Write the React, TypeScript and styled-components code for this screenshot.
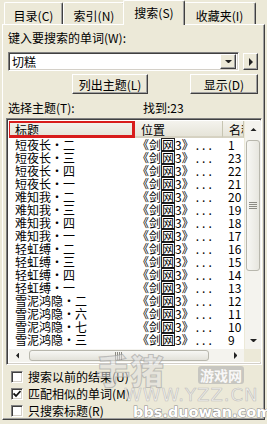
import React from "react";
import styled, { createGlobalStyle } from "styled-components";

const FONT = `"Noto Sans CJK SC", "Liberation Sans", sans-serif`;
const FACE = "#ece9d8";

const Global = createGlobalStyle`
  html, body { margin: 0; padding: 0; background: ${FACE}; }
  body { font-family: ${FONT}; font-size: 12px; color: #000; }
  * { box-sizing: border-box; }
`;

const Root = styled.div`
  position: relative;
  width: 267px;
  height: 424px;
  overflow: hidden;
  background: ${FACE};
  font-family: ${FONT};
  font-size: 12px;
  line-height: 13px;
`;

const TabBar = styled.div`
  position: relative;
  z-index: 2;
  display: flex;
  align-items: flex-end;
  height: 24px;
  padding-left: 4px;
`;

const Tab = styled.div<{ $w: number; $active?: boolean }>`
  width: ${(p) => p.$w}px;
  height: ${(p) => (p.$active ? 25 : 22)}px;
  margin: ${(p) => (p.$active ? "0 -2px -1px -2px" : "0")};
  padding-top: ${(p) => (p.$active ? 5 : 6)}px;
  background: ${FACE};
  border: 1px solid;
  border-color: #fff #404040 transparent #fff;
  border-bottom: none;
  border-radius: 2px 2px 0 0;
  box-shadow: inset -1px 0 0 #a0a0a0;
  text-align: center;
  white-space: nowrap;
  position: relative;
  z-index: ${(p) => (p.$active ? 3 : 1)};
`;

const Panel = styled.div`
  position: relative;
  z-index: 1;
  margin: 0 2px;
  height: 396px;
  border: 1px solid;
  border-color: #fff #404040 #404040 #fff;
  box-shadow: inset -1px -1px 0 #a0a0a0;
  display: flex;
  flex-direction: column;
  padding: 6px 6px 0 5px;
`;

const Label = styled.div`
  height: 13px;
  white-space: nowrap;
`;

const InputRow = styled.div`
  display: flex;
  align-items: center;
  gap: 4px;
  margin-top: 8px;
  height: 19px;
`;

const TextBox = styled.div`
  flex: 1;
  height: 19px;
  background: #fff;
  border: 1px solid;
  border-color: #7f7f7f #fff #fff #7f7f7f;
  box-shadow: inset 1px 1px 0 #404040, inset -1px -1px 0 #d4d0c8;
  display: flex;
  align-items: center;
  padding: 0 2px 0 3px;
`;

const TextValue = styled.span`
  flex: 1;
`;

const RaisedBtn = styled.div<{ $w: number; $h: number }>`
  width: ${(p) => p.$w}px;
  height: ${(p) => p.$h}px;
  background: ${FACE};
  border: 1px solid;
  border-color: #fff #404040 #404040 #fff;
  box-shadow: inset -1px -1px 0 #a0a0a0;
  display: flex;
  align-items: center;
  justify-content: center;
  flex: none;
`;

const ButtonRow = styled.div`
  display: flex;
  margin-top: 3px;
  padding-left: 64px;
  gap: 42px;
`;

const PushButton = styled.div<{ $w: number }>`
  width: ${(p) => p.$w}px;
  height: 20px;
  background: ${FACE};
  border: 1px solid;
  border-color: #fff #404040 #404040 #fff;
  box-shadow: inset -1px -1px 0 #a0a0a0;
  display: flex;
  align-items: center;
  justify-content: center;
  white-space: nowrap;
`;

const TopicRow = styled.div`
  display: grid;
  grid-template-columns: 135px 1fr;
  margin-top: 7px;
  height: 13px;
  white-space: nowrap;
`;

const ListBox = styled.div`
  margin: 4px -4px 0 -2px;
  border: 1px solid;
  border-color: #7f7f7f #fff #fff #7f7f7f;
  box-shadow: inset 1px 1px 0 #404040, inset -1px -1px 0 #d4d0c8;
  padding: 2px;
  background: #fff;
  display: grid;
  grid-template-columns: 235px 17px;
  grid-template-rows: 228px 13px;
`;

const ListArea = styled.div`
  overflow: hidden;
  display: flex;
  flex-direction: column;
`;

const COLS = "126px 88px 21px";

const HeaderRow = styled.div`
  display: grid;
  grid-template-columns: ${COLS};
  height: 17px;
  flex: none;
`;

const HeaderCell = styled.div<{ $marked?: boolean }>`
  position: relative;
  background: linear-gradient(#f4f3ee, #e6e4d8);
  border-bottom: 2px solid #d6d2c2;
  border-right: 1px solid #c7c5b2;
  padding: 2px 0 0 6px;
  white-space: nowrap;
  overflow: ${(p) => (p.$marked ? "visible" : "hidden")};
  &::after {
    content: "";
    display: ${(p) => (p.$marked ? "block" : "none")};
    position: absolute;
    top: -1px;
    left: -2px;
    right: -1px;
    bottom: -2px;
    border: 3px solid #d81c1c;
  }
`;

const Row = styled.div`
  display: grid;
  grid-template-columns: ${COLS};
  height: 13px;
  flex: none;
`;

const Cell = styled.div<{ $pad: number }>`
  padding-left: ${(p) => p.$pad}px;
  white-space: nowrap;
  overflow: hidden;
`;

const Boxed = styled.span`
  display: inline-block;
  border: 1px solid #222;
  line-height: 11px;
  height: 13px;
  vertical-align: top;
`;

const Dots = styled.span`
  letter-spacing: 3px;
  margin-left: 2px;
`;

const VScroll = styled.div`
  background: #f4f3ee;
  display: flex;
  flex-direction: column;
  border-left: 1px solid #ece9d8;
`;

const ScrollBtn = styled.div<{ $w: number; $h: number }>`
  width: ${(p) => p.$w}px;
  height: ${(p) => p.$h}px;
  flex: none;
  display: flex;
  align-items: center;
  justify-content: center;
`;

const VTrack = styled.div`
  flex: 1;
  padding: 2px 1px 0 1px;
`;

const VThumb = styled.div`
  height: 131px;
  border: 1px solid #b8b7ad;
  border-radius: 3px;
  background: linear-gradient(90deg, #f7f7f4, #e7e6df);
  display: flex;
  align-items: center;
  justify-content: center;
`;

const HScroll = styled.div`
  background: #f4f3ee;
  display: flex;
  align-items: stretch;
`;

const HTrack = styled.div`
  flex: 1;
  padding: 1px 0 1px 3px;
  display: flex;
`;

const HThumb = styled.div`
  width: 180px;
  border: 1px solid #b8b7ad;
  border-radius: 3px;
  background: linear-gradient(#f7f7f4, #e3e2da);
  display: flex;
  align-items: center;
  justify-content: center;
`;

const Corner = styled.div`
  background: ${FACE};
`;

const CheckList = styled.div`
  margin-top: 3px;
  display: flex;
  flex-direction: column;
`;

const CheckRow = styled.div`
  display: flex;
  align-items: center;
  height: 17px;
  gap: 5px;
  padding-left: 3px;
  white-space: nowrap;
`;

const CheckBox = styled.div`
  width: 12px;
  height: 12px;
  background: #fff;
  border: 1px solid;
  border-color: #808080 #fff #fff #808080;
  box-shadow: inset 1px 1px 0 #404040, inset -1px -1px 0 #d4d0c8;
  display: flex;
  align-items: center;
  justify-content: center;
  flex: none;
`;

const Watermark = styled.div`
  position: absolute;
  left: 0;
  top: 0;
  width: 267px;
  height: 424px;
  pointer-events: none;
  z-index: 5;
`;

const WmBig = styled.div`
  position: absolute;
  left: 96px;
  top: 352px;
  font-size: 34px;
  line-height: 36px;
  font-weight: 900;
  color: rgba(225, 225, 225, 0.55);
  -webkit-text-stroke: 1px rgba(150, 150, 150, 0.55);
  font-family: ${FONT};
`;

const WmTag = styled.div`
  position: absolute;
  left: 198px;
  top: 366px;
  padding: 0 2px;
  height: 18px;
  line-height: 18px;
  font-size: 14px;
  font-weight: 700;
  color: rgba(255, 255, 255, 0.9);
  background: rgba(180, 180, 180, 0.65);
  border-radius: 3px;
  font-family: ${FONT};
`;

const WmUrl = styled.div`
  position: absolute;
  left: 124px;
  top: 385px;
  font-size: 18px;
  line-height: 20px;
  letter-spacing: 1px;
  color: rgba(240, 240, 240, 0.8);
  -webkit-text-stroke: 0.6px rgba(160, 160, 160, 0.6);
  font-family: "DejaVu Sans", sans-serif;
`;

const WmBbs = styled.div`
  position: absolute;
  left: 133px;
  top: 404px;
  font-size: 14.5px;
  line-height: 17px;
  font-weight: 700;
  letter-spacing: 0px;
  color: #fff;
  -webkit-text-stroke: 1px #8a8a8a;
  paint-order: stroke fill;
  font-family: "DejaVu Sans", sans-serif;
`;

const Tri = ({ dir, size = 4 }: { dir: "up" | "down" | "left" | "right"; size?: number }) => {
  const s = size;
  const pts =
    dir === "down"
      ? `0,0 ${2 * s},0 ${s},${s}`
      : dir === "up"
      ? `0,${s} ${2 * s},${s} ${s},0`
      : dir === "right"
      ? `0,0 0,${2 * s} ${s},${s}`
      : `${s},0 ${s},${2 * s} 0,${s}`;
  const w = dir === "up" || dir === "down" ? 2 * s : s;
  const h = dir === "up" || dir === "down" ? s : 2 * s;
  return (
    <svg width={w} height={h} viewBox={`0 0 ${w} ${h}`}>
      <polygon points={pts} fill="#222" />
    </svg>
  );
};

const Grip = ({ vertical }: { vertical?: boolean }) =>
  vertical ? (
    <svg width="8" height="8" viewBox="0 0 8 8">
      {[1, 3, 5, 7].map((y) => (
        <line key={y} x1="0" y1={y - 0.5} x2="8" y2={y - 0.5} stroke="#8c8b84" strokeWidth="1" />
      ))}
    </svg>
  ) : (
    <svg width="8" height="8" viewBox="0 0 8 8">
      {[1, 3, 5, 7].map((x) => (
        <line key={x} x1={x - 0.5} y1="0" x2={x - 0.5} y2="8" stroke="#8c8b84" strokeWidth="1" />
      ))}
    </svg>
  );

const rows: [string, number][] = [
  ["短夜长·二", 1],
  ["短夜长·三", 23],
  ["短夜长·四", 22],
  ["短夜长·一", 21],
  ["难知我·二", 20],
  ["难知我·三", 19],
  ["难知我·四", 18],
  ["难知我·一", 17],
  ["轻虹缚·二", 16],
  ["轻虹缚·三", 15],
  ["轻虹缚·四", 14],
  ["轻虹缚·一", 13],
  ["雪泥鸿隐·二", 12],
  ["雪泥鸿隐·六", 11],
  ["雪泥鸿隐·七", 10],
  ["雪泥鸿隐·三", 9],
];

const checks: [string, boolean][] = [
  ["搜索以前的结果(U)", false],
  ["匹配相似的单词(M)", true],
  ["只搜索标题(R)", false],
];

export default function App() {
  return (
    <Root>
      <Global />
      <TabBar>
        <Tab $w={59}>目录(C)</Tab>
        <Tab $w={62}>索引(N)</Tab>
        <Tab $w={62} $active>
          搜索(S)
        </Tab>
        <Tab $w={73}>收藏夹(I)</Tab>
      </TabBar>
      <Panel>
        <Label>键入要搜索的单词(W):</Label>
        <InputRow>
          <TextBox>
            <TextValue>切糕</TextValue>
            <RaisedBtn $w={16} $h={15}>
              <Tri dir="down" size={3.5} />
            </RaisedBtn>
          </TextBox>
          <RaisedBtn $w={15} $h={17}>
            <Tri dir="right" size={4} />
          </RaisedBtn>
        </InputRow>
        <ButtonRow>
          <PushButton $w={76}>列出主题(L)</PushButton>
          <PushButton $w={68}>显示(D)</PushButton>
        </ButtonRow>
        <TopicRow>
          <span>选择主题(T):</span>
          <span>找到:23</span>
        </TopicRow>
        <ListBox>
          <ListArea>
            <HeaderRow>
              <HeaderCell $marked>标题</HeaderCell>
              <HeaderCell>位置</HeaderCell>
              <HeaderCell>名称</HeaderCell>
            </HeaderRow>
            {rows.map(([t, n]) => (
              <Row key={t}>
                <Cell $pad={6}>{t}</Cell>
                <Cell $pad={2}>
                  《剑<Boxed>网</Boxed>3》<Dots>...</Dots>
                </Cell>
                <Cell $pad={5}>{n}</Cell>
              </Row>
            ))}
          </ListArea>
          <VScroll>
            <ScrollBtn $w={16} $h={17}>
              <Tri dir="up" size={3.5} />
            </ScrollBtn>
            <VTrack>
              <VThumb>
                <Grip vertical />
              </VThumb>
            </VTrack>
            <ScrollBtn $w={16} $h={17}>
              <Tri dir="down" size={3.5} />
            </ScrollBtn>
          </VScroll>
          <HScroll>
            <ScrollBtn $w={17} $h={13}>
              <Tri dir="left" size={3.5} />
            </ScrollBtn>
            <HTrack>
              <HThumb>
                <Grip />
              </HThumb>
            </HTrack>
            <ScrollBtn $w={17} $h={13}>
              <Tri dir="right" size={3.5} />
            </ScrollBtn>
          </HScroll>
          <Corner />
        </ListBox>
        <CheckList>
          {checks.map(([t, c]) => (
            <CheckRow key={t}>
              <CheckBox>
                {c && (
                  <svg width="8" height="8" viewBox="0 0 8 8">
                    <polyline points="0.5,3.5 3,6 7.5,1" fill="none" stroke="#111" strokeWidth="1.8" />
                  </svg>
                )}
              </CheckBox>
              <span>{t}</span>
            </CheckRow>
          ))}
        </CheckList>
      </Panel>
      <Watermark>
        <WmBig>手猪</WmBig>
        <WmTag>游戏网</WmTag>
        <WmUrl>WWW.YZZ.CN</WmUrl>
        <WmBbs>bbs.duowan.com</WmBbs>
      </Watermark>
    </Root>
  );
}
